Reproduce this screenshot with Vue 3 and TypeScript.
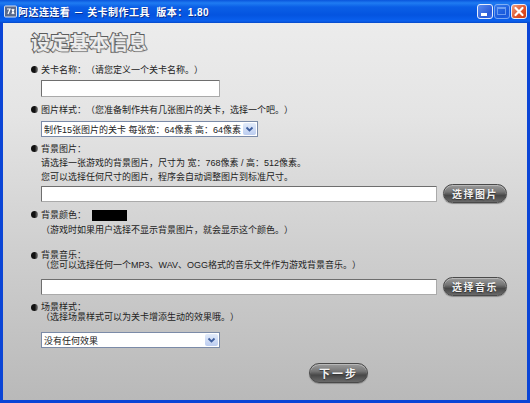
<script setup lang="ts">
const bgSize = "制作15张图片的关卡 每张宽：64像素 高：64像素";
const effect = "没有任何效果";
</script>

<template>
  <div class="win">
    <header class="titlebar">
      <svg class="appicon" viewBox="0 0 13 13" width="13" height="13">
        <rect x="0.5" y="1" width="12" height="11" rx="1" fill="#5a6a8c" stroke="#d8e2f4" />
        <path d="M3 4h3L4 9M8 4l2 5M10 4L8 9" fill="none" stroke="#fff" stroke-width="1.2" />
      </svg>
      <span class="title">阿达连连看 － 关卡制作工具&nbsp; 版本：1.80</span>
      <div class="controls">
        <span class="ctl min"><i></i></span>
        <span class="ctl max"><i></i></span>
        <span class="ctl close">
          <svg viewBox="0 0 14 13" width="14" height="13">
            <path d="M3.5 3l7 7M10.5 3l-7 7" stroke="#fff" stroke-width="2.2" stroke-linecap="round" />
          </svg>
        </span>
      </div>
    </header>

    <main class="body">
      <h1 class="heading">设定基本信息</h1>

      <section class="sec s1">
        <p class="lbl">关卡名称：（请您定义一个关卡名称。）</p>
        <input class="field short" type="text" />
      </section>

      <section class="sec s2">
        <p class="lbl">图片样式：（您准备制作共有几张图片的关卡，选择一个吧。）</p>
        <div class="select wide1">
          <span>{{ bgSize }}</span>
          <b class="arrow"><svg viewBox="0 0 9 7" width="9" height="7"><path d="M1.5 1.5L4.5 4.5L7.5 1.5" fill="none" stroke="#3f5f9f" stroke-width="1.8" /></svg></b>
        </div>
      </section>

      <section class="sec s3">
        <p class="lbl">背景图片：</p>
        <p class="txt">请选择一张游戏的背景图片，尺寸为 宽：768像素 / 高：512像素。</p>
        <p class="txt">您可以选择任何尺寸的图片，程序会自动调整图片到标准尺寸。</p>
        <div class="pick">
          <input class="field long" type="text" />
          <button class="pill" type="button">选择图片</button>
        </div>
      </section>

      <section class="sec s4">
        <div class="colorrow">
          <p class="lbl">背景颜色：</p>
          <span class="swatch"></span>
        </div>
        <p class="txt note">（游戏时如果用户选择不显示背景图片，就会显示这个颜色。）</p>
      </section>

      <section class="sec s5">
        <p class="lbl tight">背景音乐：</p>
        <p class="txt tight">（您可以选择任何一个MP3、WAV、OGG格式的音乐文件作为游戏背景音乐。）</p>
        <div class="pick p5">
          <input class="field long" type="text" />
          <button class="pill" type="button">选择音乐</button>
        </div>
      </section>

      <section class="sec s6">
        <p class="lbl tight">场景样式：</p>
        <p class="txt tight">（选择场景样式可以为关卡增添生动的效果哦。）</p>
        <div class="select wide2">
          <span>{{ effect }}</span>
          <b class="arrow"><svg viewBox="0 0 9 7" width="9" height="7"><path d="M1.5 1.5L4.5 4.5L7.5 1.5" fill="none" stroke="#3f5f9f" stroke-width="1.8" /></svg></b>
        </div>
      </section>

      <div class="next"><button class="pill" type="button">下一步</button></div>
    </main>
  </div>
</template>

<style>
html, body { margin: 0; padding: 0; background: #0a3ec8; }
</style>

<style scoped>
.win {
  width: 530px;
  height: 403px;
  box-sizing: border-box;
  display: flex;
  flex-direction: column;
  font-family: "Liberation Sans", "Noto Sans CJK SC", sans-serif;
  text-spacing-trim: space-all;
  color: #222;
  overflow: hidden;
  background: #0b45d6;
  padding-bottom: 3px;
}
p, h1 { margin: 0; }
.titlebar {
  height: 23px;
  flex: none;
  display: flex;
  align-items: center;
  padding: 0 3px 0 4px;
  background: linear-gradient(#0a55dc 0, #1f7cf2 3px, #0b5fe6 7px, #0454e0 15px, #0a60ee 21px, #0548c8 23px);
  color: #fff;
}
.appicon { margin-right: 1px; }
.title {
  font-size: 10px;
  font-weight: 700;
  letter-spacing: 0.45px;
  text-shadow: 1px 1px 0 #0a2f90;
  white-space: nowrap;
}
.controls { margin-left: auto; display: flex; gap: 1px; }
.ctl {
  width: 14px;
  height: 13px;
  border: 1px solid #e8eefc;
  border-radius: 3px;
  display: block;
  background: linear-gradient(135deg, #5b8df0, #2a5bd8 70%, #3a6ce8);
}
.min i { display: block; width: 6px; height: 3px; background: #fff; margin: 8px 0 0 3px; }
.max { opacity: 0.5; }
.max i { display: block; width: 9px; height: 8px; border: 1px solid #cfe0ff; border-top-width: 2px; margin: 2px 0 0 2px; box-sizing: border-box; }
.close { background: linear-gradient(135deg, #f0a080, #dd5028 60%, #c83c14); }
.close svg { display: block; }

.body {
  flex: 1;
  margin: 0 3px;
  padding: 8px 0 0 28px;
  box-sizing: border-box;
  background: linear-gradient(#ececec, #e4e4e4 25%, #cfcfcf 60%, #b9b9b9);
  min-height: 0;
}
.heading {
  font-family: "Noto Sans CJK SC", sans-serif;
  font-size: 19px;
  line-height: 22px;
  font-weight: 700;
  color: #ececec;
  letter-spacing: 0.4px;
  -webkit-text-stroke: 2px #5c5c5c;
  paint-order: stroke fill;
  text-shadow: 1px 1px 1px #999;
}
.sec { display: flex; flex-direction: column; }
.s1 { margin-top: 10px; }
.s2 { margin-top: 6px; }
.s3 { margin-top: 5px; }
.s4 { margin-top: 5px; }
.s5 { margin-top: 13px; }
.s6 { margin-top: 6px; }
.lbl, .txt {
  font-size: 9px;
  line-height: 14px;
  white-space: nowrap;
  padding-left: 10px;
}
.lbl { position: relative; }
.lbl::before {
  content: "";
  position: absolute;
  left: 0;
  top: 3px;
  width: 7px;
  height: 7px;
  border-radius: 50%;
  background: linear-gradient(90deg, #111 55%, #888);
}
.tight { line-height: 10px; }
.lbl.tight::before { top: 2px; }
.note { margin-top: 1px; }
.field {
  display: block;
  box-sizing: border-box;
  margin: 3px 0 0 10px;
  border: 1px solid #6e6e6e;
  border-right-color: #aaa;
  border-bottom-color: #aaa;
  border-radius: 1px;
  background: #fff;
  padding: 0;
  outline: none;
}
.short { width: 179px; height: 17px; }
.long { width: 396px; height: 16px; margin-top: 0; }
.select {
  display: flex;
  align-items: center;
  justify-content: space-between;
  box-sizing: border-box;
  margin: 4px 0 0 10px;
  height: 16px;
  border: 1px solid #7b8ba8;
  background: #fff;
  font-size: 9px;
  padding-left: 2px;
  white-space: nowrap;
}
.wide1 { width: 217px; }
.wide2 { width: 179px; margin-top: 10px; }
.arrow {
  width: 13px;
  height: 12px;
  margin-right: 1px;
  border-radius: 2px;
  background: linear-gradient(#e2ebfa, #bccdf0);
  display: flex;
  align-items: center;
  justify-content: center;
}
.pick { display: flex; align-items: center; }
.p5 { margin-top: 7px; }
.pill {
  margin-left: 6px;
  width: 64px;
  height: 19px;
  padding: 0;
  border: 1px solid #4a4a4a;
  border-radius: 10px;
  background: linear-gradient(#9c9c9c, #767676 40%, #474747 62%, #6a6a6a);
  color: #f2f2f2;
  font-family: "Noto Sans CJK SC", sans-serif;
  font-size: 10px;
  font-weight: 700;
  letter-spacing: 1.5px;
  line-height: 15px;
  text-shadow: 0 1px 1px #333;
  box-shadow: 0 1px 1px #8a8a8a, inset 0 1px 0 #b8b8b8;
}
.colorrow { display: flex; align-items: center; }
.colorrow .lbl { width: 51px; }
.swatch { width: 35px; height: 11px; background: #000; }
.next { margin: 15px 0 0 278px; }
.next .pill { margin: 0; width: 59px; height: 20px; font-size: 11px; letter-spacing: 2px; }
</style>
